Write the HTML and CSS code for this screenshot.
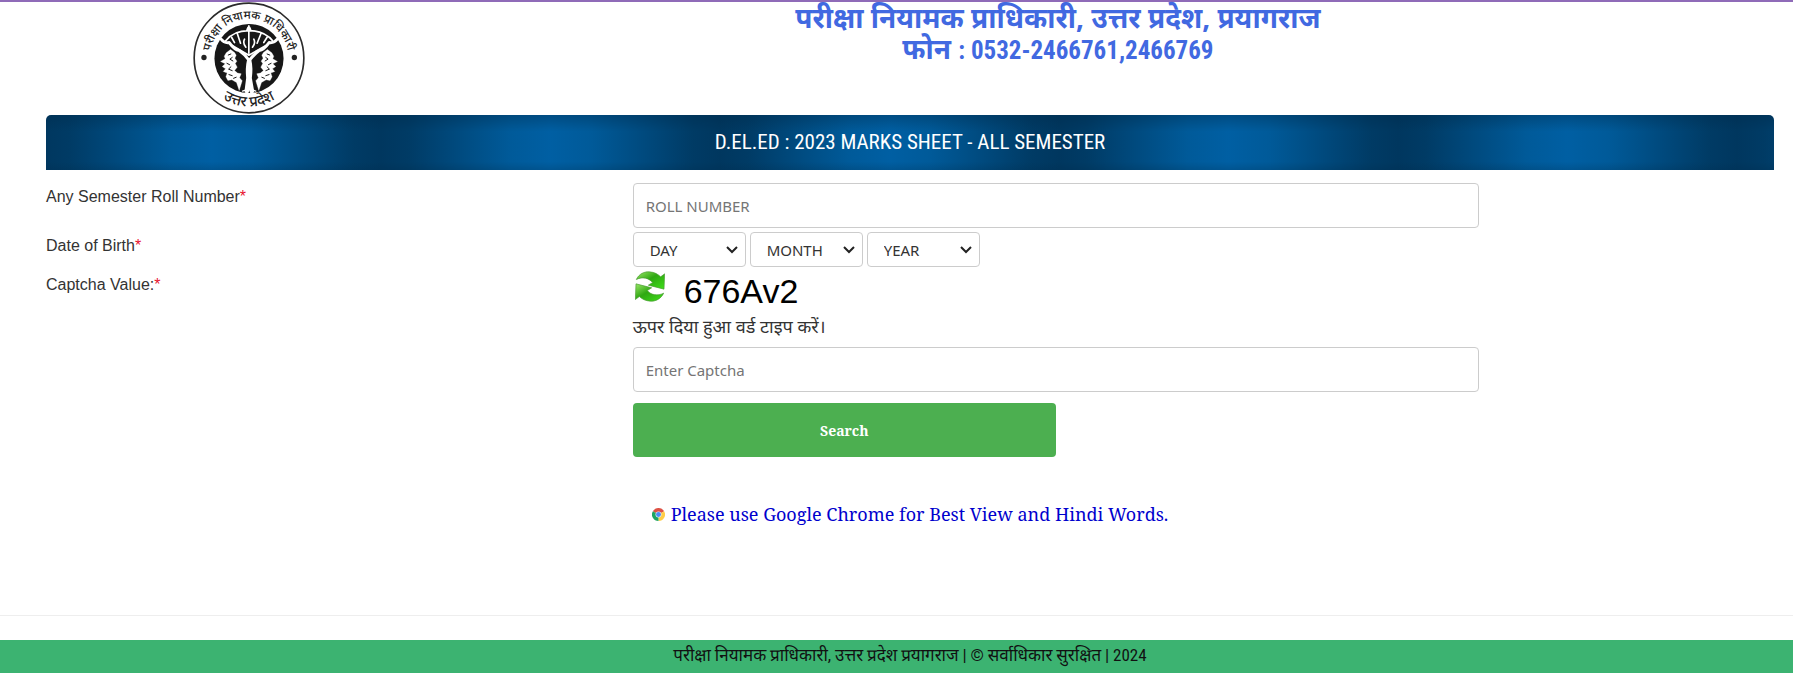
FILE: index.html
```html
<!DOCTYPE html>
<html lang="hi">
<head>
<meta charset="utf-8">
<title>D.El.Ed 2023 Marks Sheet</title>
<link rel="stylesheet" href="styles.css">
</head>
<body>
<div class="page">
  <header class="header">
    <div class="brand">
      <svg class="emblem" viewBox="39 6 337 337" role="img" aria-label="परीक्षा नियामक प्राधिकारी, उत्तर प्रदेश">
        <defs>
          <path id="arc-top" d="M89.500 174.500A118 118 0 0 1 325.500 174.500"/>
          <path id="arc-bottom" d="M61.500 174.500A146 146 0 0 0 353.500 174.500"/>
        </defs>
        <circle cx="207.500" cy="174.500" r="165" fill="#fff" stroke="#2b2b2b" stroke-width="5"/>
        <circle cx="207.500" cy="176" r="104" fill="#171717"/>
        <circle cx="72" cy="173" r="8" fill="#222"/>
        <circle cx="344" cy="173" r="8" fill="#222"/>
        <text class="emblem-text"><textPath href="#arc-top" startOffset="50%" text-anchor="middle">परीक्षा नियामक प्राधिकारी</textPath></text>
        <text class="emblem-text emblem-text-large"><textPath href="#arc-bottom" startOffset="50%" text-anchor="middle">उत्तर प्रदेश</textPath></text>
        <g fill="none" stroke="#fff" stroke-linecap="round" stroke-linejoin="round">
          <path stroke-width="9" d="M124 118Q132 130 148 128Q164 150 178 152Q196 164 208 182Q222 164 238 152Q252 150 268 128Q284 130 292 118"/>
          <path stroke-width="14" d="M208 184Q203 205 206 235L201 274M208 184Q213 205 209 235L216 274"/>
          <path stroke-width="5" d="M136 124Q160 92 207 92Q254 92 280 124M207 78V160M201 92Q207 70 213 92M152 134L207 166L264 134"/>
          <path stroke-width="5" d="M155 112L164 128M172 100L182 130M232 130L244 100M262 112L252 128M194 118Q188 130 198 142M222 118Q228 130 218 142"/>
          <path stroke-width="4" d="M188 274L206 268M228 274L212 268"/>
        </g>
        <g fill="#fff" stroke="#fff" stroke-width="1" stroke-linejoin="round">
          <path d="M139 159L152 149L164 158L169 166L165 175L171 184L166 191L172 202L164 212L173 220L184 222L179 234L187 243L178 272L170 248L156 240L144 242L138 231L142 220L130 215L137 207L127 200L136 192L122 185L136 177L133 169Z"/>
          <path d="M276 159L263 149L251 158L246 166L250 175L244 184L249 191L243 202L251 212L242 220L231 222L236 234L228 243L237 272L245 248L259 240L271 242L277 231L273 220L285 215L278 207L288 200L279 192L293 185L279 177L282 169Z"/>
        </g>
        <g fill="none" stroke="#171717" stroke-width="3">
          <path d="M144 166L154 162M158 172L150 178L160 184M140 190L150 195M154 200L146 208L158 213M146 224L158 228M160 236L170 232"/>
          <path d="M271 166L261 162M257 172L265 178L255 184M275 190L265 195M261 200L269 208L257 213M269 224L257 228M255 236L245 232"/>
        </g>
      </svg>
    </div>
    <h1 class="title">परीक्षा नियामक प्राधिकारी, उत्तर प्रदेश, प्रयागराज<br>फोन <span class="phone">: 0532-2466761,2466769</span></h1>
  </header>

  <main class="content">
    <h2 class="banner">D.EL.ED : 2023 MARKS SHEET - ALL SEMESTER</h2>
    <form class="form">
      <div class="row">
        <label class="label" for="roll">Any Semester Roll Number<span class="required">*</span></label>
        <div class="field"><input class="input" id="roll" type="text" placeholder="ROLL NUMBER"></div>
      </div>
      <div class="row">
        <label class="label" for="day">Date of Birth<span class="required">*</span></label>
        <div class="field dates">
          <div class="select-box"><select class="select" id="day" aria-label="Day"><option>DAY</option></select><svg class="chevron" viewBox="0 0 12 8"><path d="M1 1l5 5 5-5"/></svg></div>
          <div class="select-box"><select class="select" aria-label="Month"><option>MONTH</option></select><svg class="chevron" viewBox="0 0 12 8"><path d="M1 1l5 5 5-5"/></svg></div>
          <div class="select-box"><select class="select" aria-label="Year"><option>YEAR</option></select><svg class="chevron" viewBox="0 0 12 8"><path d="M1 1l5 5 5-5"/></svg></div>
        </div>
      </div>
      <div class="row">
        <label class="label" for="captcha">Captcha Value:<span class="required">*</span></label>
        <div class="field">
          <div class="captcha">
            <button class="refresh" type="button" aria-label="Refresh captcha">
              <svg viewBox="0 0 90 92">
                <defs>
                  <linearGradient id="leaf" x1="0" y1="0" x2="1" y2="1"><stop offset="0" stop-color="#9be868"/><stop offset=".45" stop-color="#2fa812"/><stop offset="1" stop-color="#3fe01a"/></linearGradient>
                </defs>
                <g fill="url(#leaf)" stroke="#4c9a35" stroke-width="2" stroke-linejoin="round">
                  <path d="M4 25C12 8 28 1 43 2C58 3 69 9 77 17L89 8L87 54L40 42L53 34C41 20 22 16 4 25Z"/>
                  <path d="M86 66C78 83 62 91 46 90C32 89 21 84 13 76L1 85L3 38L50 50L37 58C48 72 68 75 86 66Z"/>
                </g>
              </svg>
            </button>
            <span class="code">676Av2</span>
          </div>
          <p class="hint">ऊपर दिया हुआ वर्ड टाइप करें।</p>
          <input class="input" id="captcha" type="text" placeholder="Enter Captcha">
          <button class="search" type="button">Search</button>
        </div>
      </div>
    </form>
    <div class="notice">
      <a class="notice-link" href="#">
        <svg class="chrome" viewBox="0 0 24 24" aria-hidden="true">
          <path fill="#dd5144" d="M12 12L1.600 6A12 12 0 0 1 22.400 6Z"/>
          <path fill="#ffcd46" d="M12 12L22.400 6A12 12 0 0 1 12 24Z"/>
          <path fill="#1da462" d="M12 12L12 24A12 12 0 0 1 1.600 6Z"/>
          <circle cx="12" cy="12" r="5.500" fill="#e8f1f5"/>
          <circle cx="12" cy="12" r="4.500" fill="#4c8bf5"/>
        </svg>
        <span>Please use Google Chrome for Best View and Hindi Words.</span>
      </a>
    </div>
  </main>
  <hr class="rule">
  <footer class="footer">परीक्षा नियामक प्राधिकारी, उत्तर प्रदेश प्रयागराज | © सर्वाधिकार सुरक्षित | 2024</footer>
</div>
</body>
</html>
```
FILE: styles.css
```css
* { box-sizing: border-box; }

body {
  margin: 0;
  background: #fff;
  color: #333;
  font: 16px/20px "Liberation Sans", Arial, sans-serif;
}

.page { border-top: 2px solid #8f6bb8; }

.header { display: flex; }

.brand {
  flex: 0 0 18%;
  padding-left: 193px;
}

.emblem {
  display: block;
  width: 112px;
  height: 112px;
  margin-bottom: 1px;
}

.emblem-text {
  font: 500 35px "Noto Sans Devanagari", "Noto Sans", sans-serif;
  fill: #222;
}

.emblem-text-large { font-size: 44px; }

.title {
  flex: 1;
  margin: 0;
  text-align: center;
  color: #4169e1;
  font: bold 28px/31px "Noto Sans", sans-serif;
}

.phone { font: bold 25px/25px "Agency FB", "Roboto Condensed", "Liberation Sans", sans-serif; }

.content { padding: 0 19px 0 46px; }

.banner {
  margin: 0;
  height: 55px;
  border-radius: 5px 5px 0 0;
  text-align: center;
  color: #fff;
  font: 21px/54px "Agency FB", "Roboto Condensed", "Roboto", sans-serif;
  background:
    linear-gradient(rgba(0, 40, 70, .35), transparent 30%, transparent 85%, rgba(0, 40, 70, .2)),
    linear-gradient(90deg, #00375f, #003b65 8%, #005a99 38%, #005fa3 50%, #005a99 62%, #003b65 92%, #00375f) -4px 0 / 339px 100%;
}

.form {
  display: grid;
  gap: 4px;
  padding-top: 13px;
}

.row { display: flex; }

.label {
  flex: 0 0 33.95%;
  padding-top: 4px;
}

.required { color: #e8112d; }

.field { flex: 0 0 49%; }

.input,
.select {
  display: block;
  width: 100%;
  margin: 0;
  border: 1px solid #ccc;
  border-radius: 4px;
  background: #fff;
  color: #333;
  font: 15px "Noto Sans", sans-serif;
}

.input {
  height: 45px;
  padding: 0 12px;
}

.input::placeholder { color: #757575; opacity: 1; }

.dates {
  display: flex;
  gap: 4px;
}

.select-box {
  position: relative;
  width: 113px;
}

.select {
  height: 35px;
  padding: 0 16px;
  appearance: none;
}

.chevron {
  position: absolute;
  top: 14px;
  right: 8px;
  width: 12px;
  height: 8px;
  fill: none;
  stroke: #222;
  stroke-width: 2;
  pointer-events: none;
}

.captcha {
  display: flex;
  gap: 17px;
  height: 44px;
}

.refresh {
  width: 34px;
  height: 31px;
  padding: 0 2px;
  border: 0;
  background: none;
}

.refresh svg {
  display: block;
  width: 30px;
  height: 31px;
}

.code {
  color: #000;
  font-size: 34px;
  line-height: 40px;
}

.hint {
  margin: 0 0 4px;
  font: 18px/28px "Noto Sans Devanagari", "Noto Sans", sans-serif;
}

.search {
  display: block;
  width: 50%;
  height: 54px;
  margin-top: 11px;
  border: 0;
  border-radius: 4px;
  background: #4caf50;
  color: #fff;
  font: bold 14px "Noto Serif", "DejaVu Serif Condensed", serif;
}

.notice {
  padding: 44px 0 88px;
  text-align: center;
}

.notice-link {
  display: inline-flex;
  align-items: center;
  gap: 6px;
  color: #0000cd;
  text-decoration: none;
  font: 18px/26px "Noto Serif", "DejaVu Serif Condensed", serif;
}

.chrome {
  width: 13px;
  height: 13px;
}

.rule {
  margin: 0 0 24px;
  border: 0;
  border-top: 1px solid #eee;
}

.footer {
  height: 33px;
  padding: 0 19px 0 46px;
  background: #3cb371;
  color: #111;
  text-align: center;
  font: 17px/31px "Roboto Condensed", "Noto Sans Devanagari", "Noto Sans", sans-serif;
}
```
